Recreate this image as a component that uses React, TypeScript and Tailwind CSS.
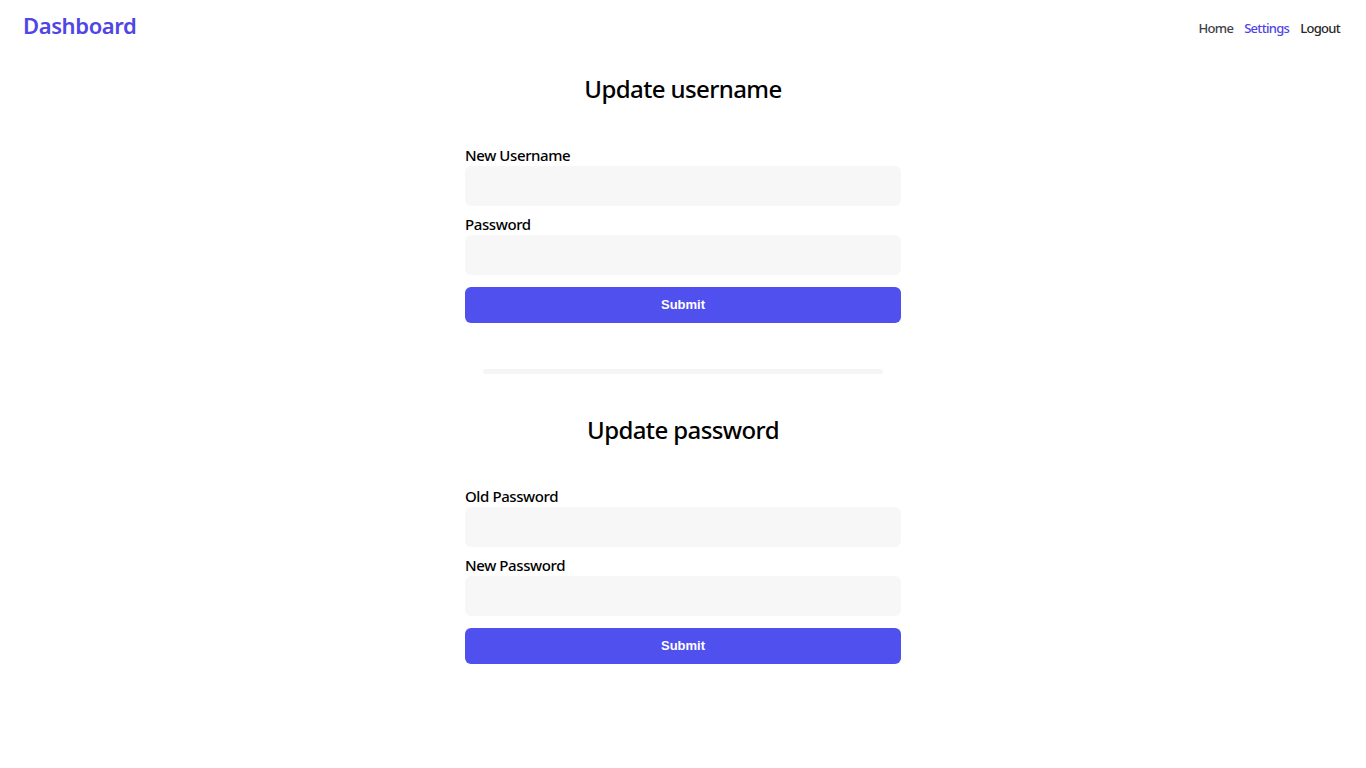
import React from "react";

const font = { fontFamily: '"Noto Sans", "Open Sans", sans-serif' };

function Field({ label, type = "text" }: { label: string; type?: string }) {
  return (
    <div className="flex flex-col">
      <label className="text-[15px] leading-[22px] font-medium text-black tracking-[-0.4px]">{label}</label>
      <input type={type} className="h-[40px] w-full rounded-md bg-[#f7f7f7] outline-none px-3" />
    </div>
  );
}

function SubmitButton() {
  return (
    <button
      className="mt-3 h-[36px] w-full rounded-md bg-[#5050ee] text-white text-[13px] font-bold"
      style={{ fontFamily: '"Liberation Sans", Arial, sans-serif' }}
    >
      Submit
    </button>
  );
}

export default function App() {
  return (
    <div className="min-h-screen bg-white" style={font}>
      {/* Top bar */}
      <header className="flex justify-between items-start px-[23px]">
        <a className="pt-[9px] text-[22px] leading-[32px] font-semibold text-[#4f46e5] tracking-[-0.4px]">Dashboard</a>
        <nav className="flex gap-[11px] pt-[18px] pr-[3px] text-[13px] leading-[20px] font-medium tracking-[-0.7px]">
          <a className="text-[#3f3f46]">Home</a>
          <a className="text-[#4f46e5]">Settings</a>
          <a className="text-[#27272a]">Logout</a>
        </nav>
      </header>

      <main className="mx-auto w-[436px] flex flex-col items-stretch mt-[30px]">
        <h2 className="text-center text-[24px] leading-[36px] font-medium text-black tracking-[-0.6px]">Update username</h2>
        <form className="mt-[37px] flex flex-col gap-[7px]">
          <Field label="New Username" />
          <Field label="Password" type="password" />
        </form>
        <SubmitButton />

        <div className="mt-[46px] mx-auto w-[400px] h-[5px] rounded-full bg-[#f5f5f5]" />

        <h2 className="mt-[38px] text-center text-[24px] leading-[36px] font-medium text-black tracking-[-0.6px]">Update password</h2>
        <form className="mt-[37px] flex flex-col gap-[7px]">
          <Field label="Old Password" type="password" />
          <Field label="New Password" type="password" />
        </form>
        <SubmitButton />
      </main>
    </div>
  );
}
